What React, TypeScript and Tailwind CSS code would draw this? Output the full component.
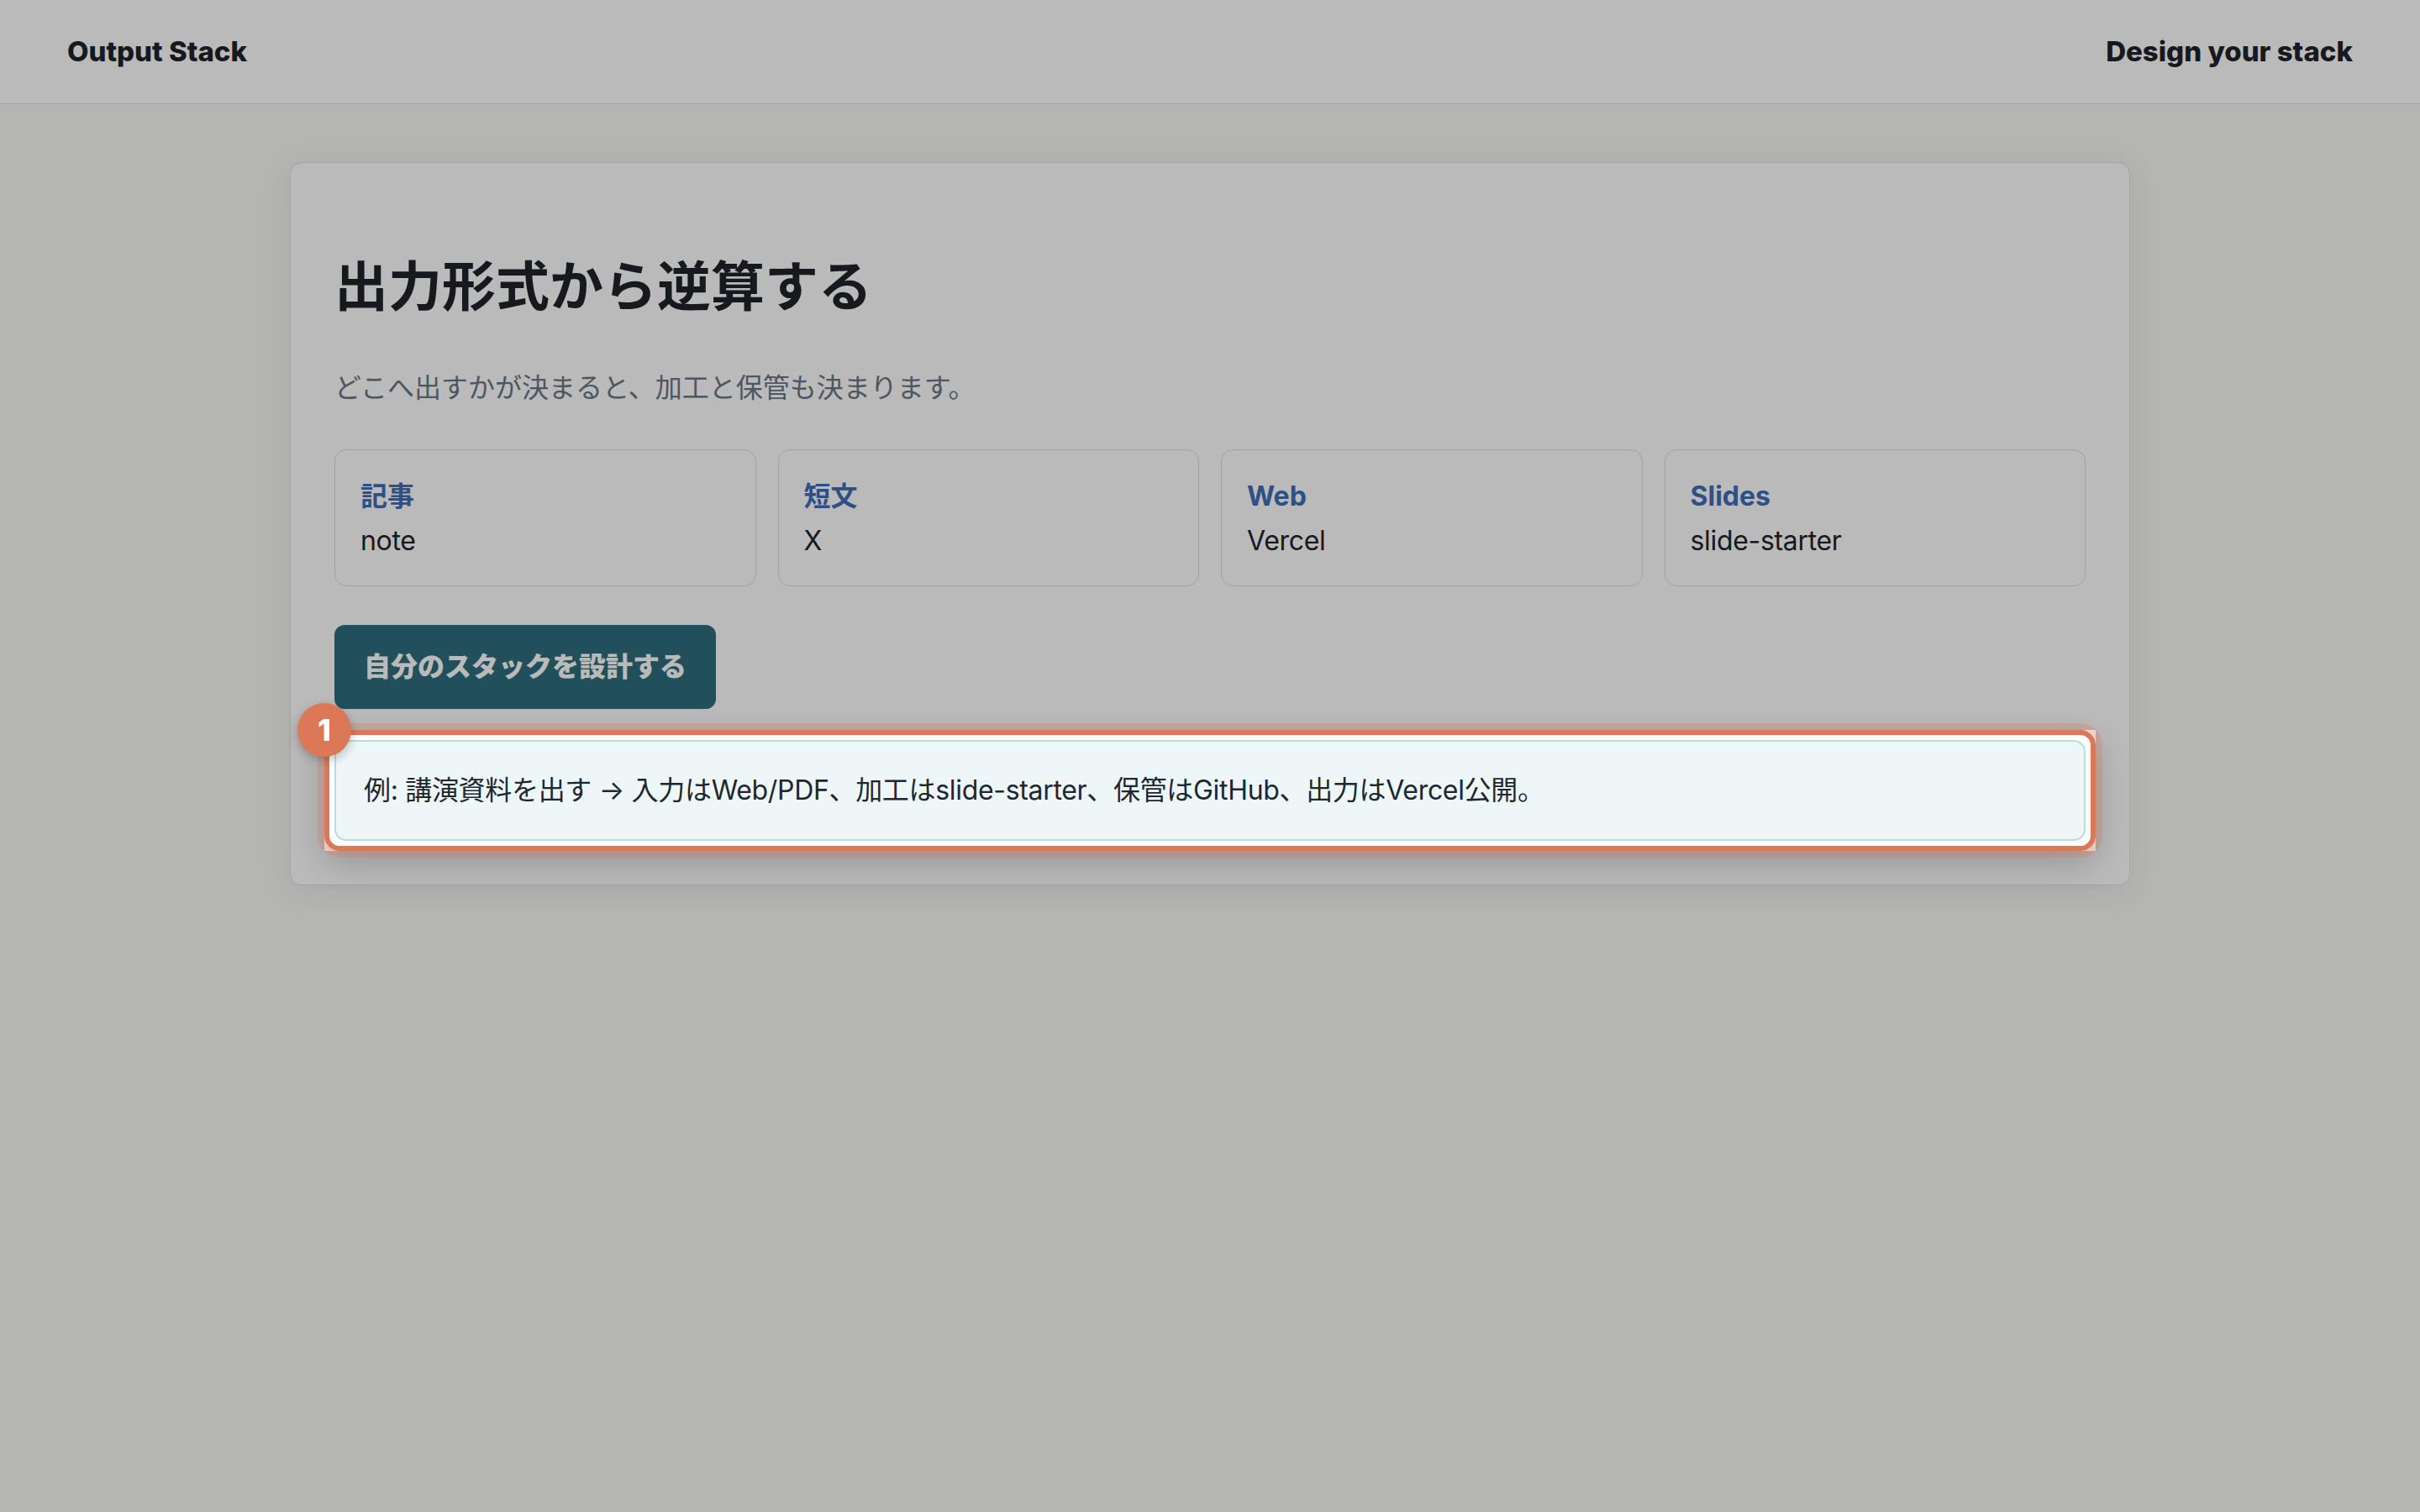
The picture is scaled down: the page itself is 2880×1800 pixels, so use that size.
import React from "react";

type OutputTarget = {
  label: string;
  value: string;
};

const outputs: OutputTarget[] = [
  { label: "記事", value: "note" },
  { label: "短文", value: "X" },
  { label: "Web", value: "Vercel" },
  { label: "Slides", value: "slide-starter" },
];

const font = "font-['Inter','Noto_Sans_CJK_JP',sans-serif]";

const Header: React.FC = () => (
  <header className="flex h-[124px] items-center justify-between border-b border-[#e3e4ea] bg-white px-[80px]">
    <span className="text-[33px] font-extrabold text-[#1f242b]">Output Stack</span>
    <a href="#design" className="text-[33px] font-extrabold text-[#1f242b]">
      Design your stack
    </a>
  </header>
);

// tour step: the example line is lifted above the dim layer and outlined
const TourHighlight: React.FC<{ step: number; children: React.ReactNode }> = ({ step, children }) => (
  <div className="relative z-50 -mx-[12px] -mb-[12px] mt-[25px] bg-white p-[12px]">
    <div className="pointer-events-none absolute inset-0 rounded-[18px] border-[6px] border-[#dc7858] shadow-[0_0_0_8px_rgba(220,120,88,0.28),0_14px_40px_rgba(0,0,0,0.2)]" />
    {children}
    <span className="absolute -left-[32px] -top-[32px] flex h-[64px] w-[64px] items-center justify-center rounded-full bg-[#dc7858] text-[36px] font-extrabold text-white shadow-[0_4px_12px_rgba(0,0,0,0.25)]">
      {step}
    </span>
  </div>
);

const App: React.FC = () => {
  return (
    <div className={`min-h-screen bg-[#f8f8f5] ${font}`}>
      <Header />

      <main className="flex justify-center">
        <section className="mt-[69px] w-[2190px] rounded-[14px] border border-[#dde1e6] bg-white px-[52px] pb-[52px] pt-[107px] shadow-[0_6px_40px_rgba(0,0,0,0.07)]">
          <h1 className="text-[64px] font-bold leading-[80px] text-[#1f242b]">出力形式から逆算する</h1>
          <p className="mt-[57px] text-[32px] leading-[48px] text-[#6b7684]">
            どこへ出すかが決まると、加工と保管も決まります。
          </p>

          <div className="mt-[49px] grid grid-cols-4 gap-[26px]">
            {outputs.map((item) => (
              <div
                key={item.label}
                className="rounded-[14px] border border-[#d9dde3] px-[30px] pb-[28px] pt-[30px] text-[32px] leading-[50px]"
              >
                <div className="font-bold text-[#3e6fb8]">{item.label}</div>
                <div className="mt-[3px] tracking-[-0.01em] text-[#1f242b]">{item.value}</div>
              </div>
            ))}
          </div>

          <button
            id="design"
            type="button"
            className="mt-[46px] flex h-[100px] items-center rounded-[12px] bg-[#2f6e7c] px-[35px] text-[32px] font-extrabold text-white"
          >
            自分のスタックを設計する
          </button>

          <TourHighlight step={1}>
            <p className="flex h-[120px] items-center rounded-[14px] border-2 border-[#b9dcdc] bg-[#eef7f8] px-[33px] text-[32px] tracking-[-0.01em] text-[#1d2730]">
              例: 講演資料を出す → 入力はWeb/PDF、加工はslide-starter、保管はGitHub、出力はVercel公開。
            </p>
          </TourHighlight>
        </section>
      </main>

      {/* dim layer behind the active tour step */}
      <div className="pointer-events-none fixed inset-0 z-40 bg-black/[0.27]" />
    </div>
  );
};

export default App;
